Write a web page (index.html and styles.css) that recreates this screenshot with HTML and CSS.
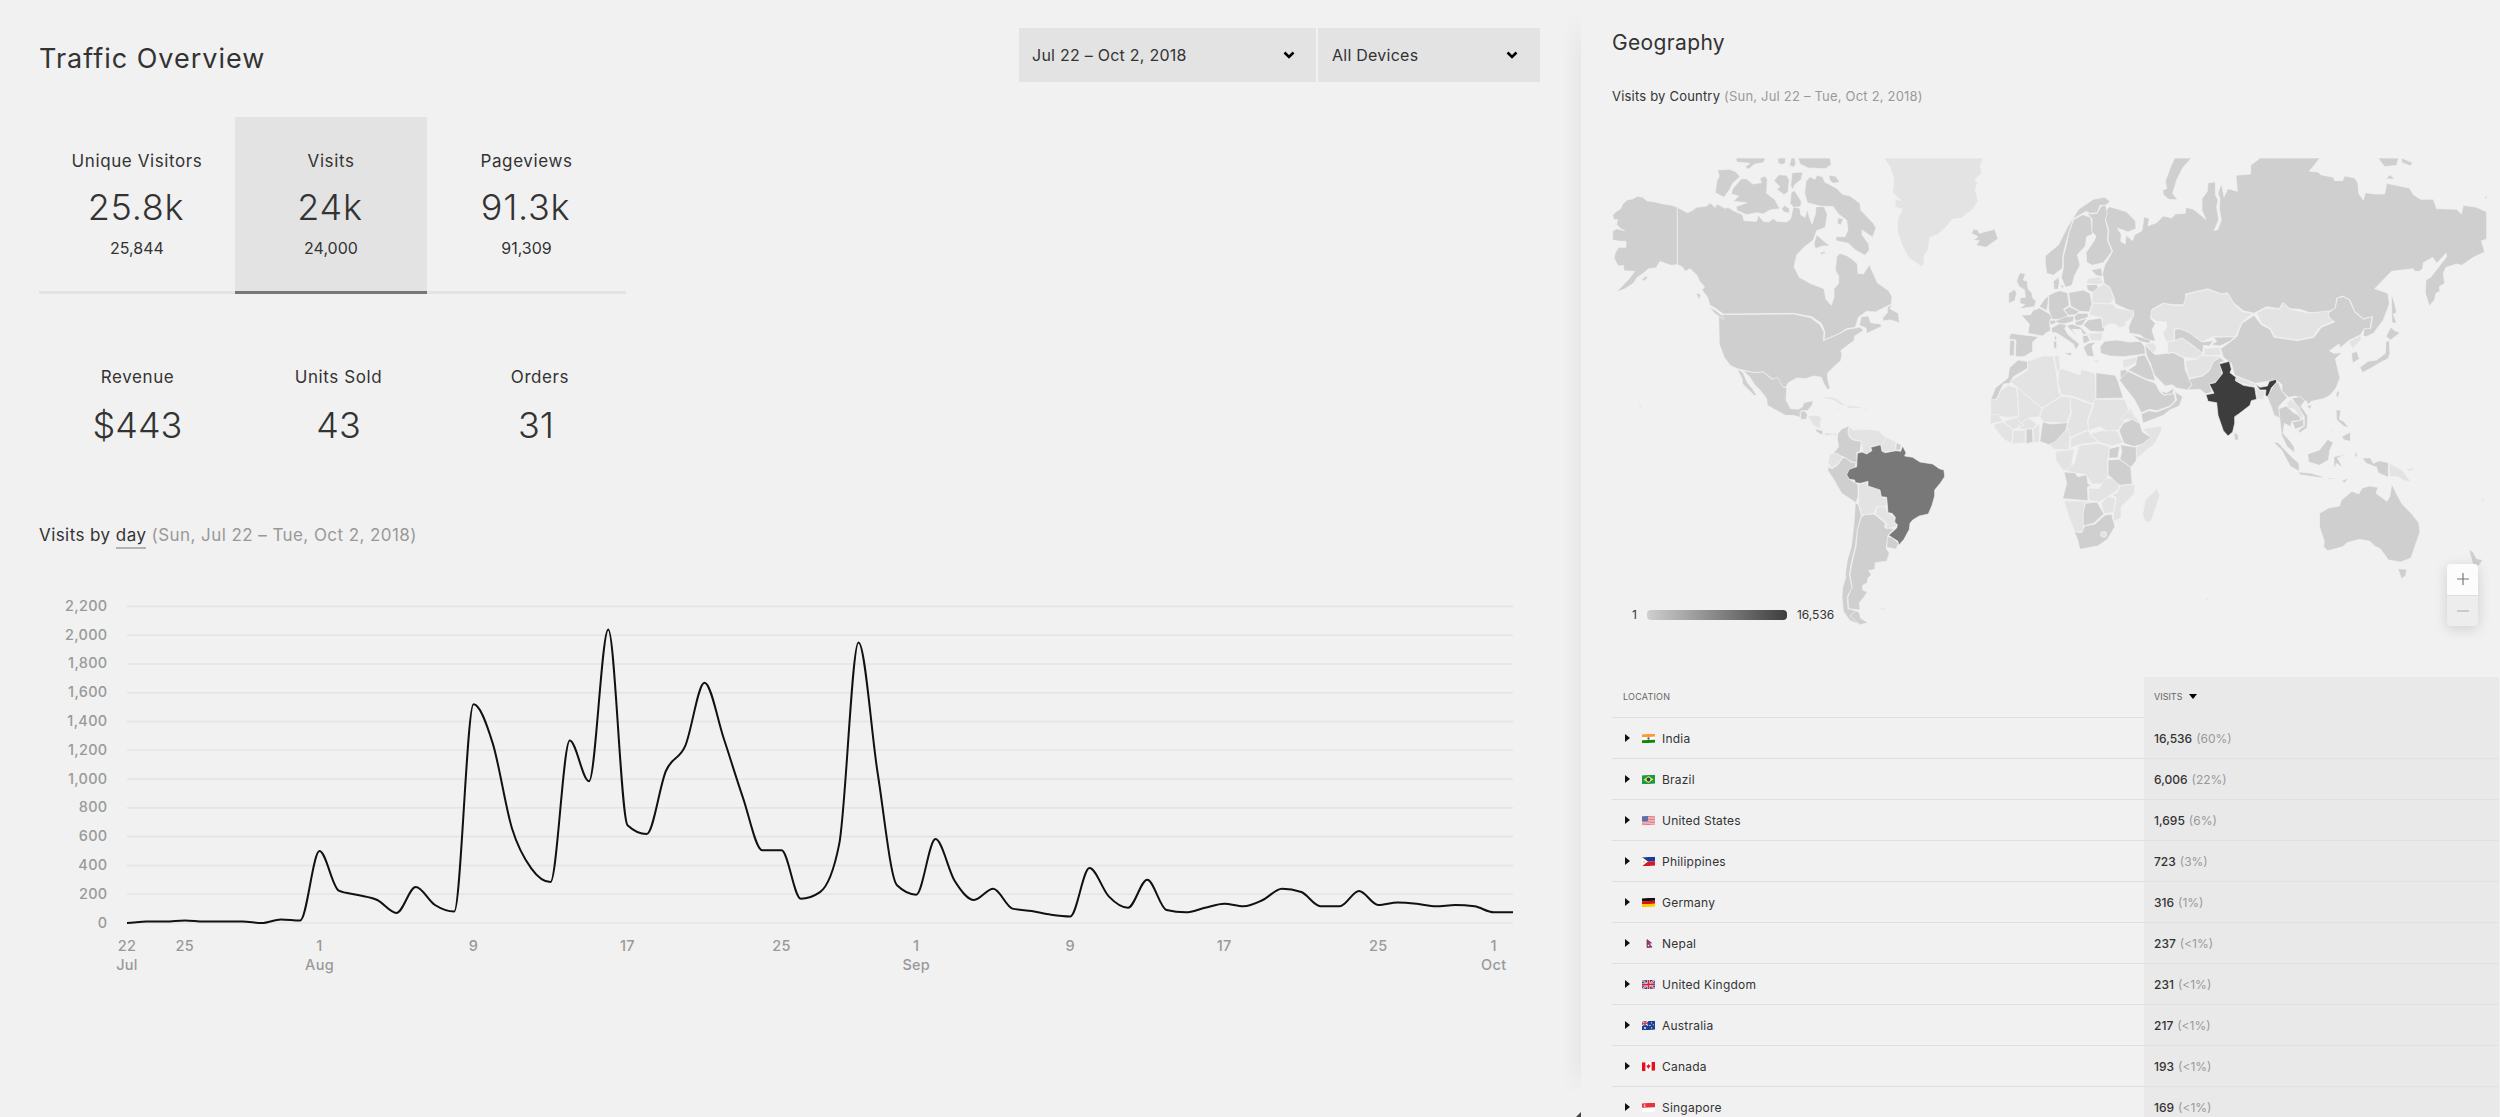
FILE: index.html
```html
<!DOCTYPE html>
<html lang="en">
<head>
    <meta charset="utf-8">
    <title>Traffic Overview</title>
    <link rel="stylesheet" href="styles.css">
</head>
<body>
    <main class="traffic">
        <header class="traffic-header">
            <h1>Traffic Overview</h1>
            <div class="filters">
                <button class="filter filter-date">
                    <span>Jul 22 – Oct 2, 2018</span>
                    <svg class="chevron" viewBox="0 0 12 8"><path d="M1.5 1.5 6 6 10.5 1.5"/></svg>
                </button>
                <button class="filter filter-device">
                    <span>All Devices</span>
                    <svg class="chevron" viewBox="0 0 12 8"><path d="M1.5 1.5 6 6 10.5 1.5"/></svg>
                </button>
            </div>
        </header>

        <div class="stats tabs">
            <div class="stat">
                <div class="label">Unique Visitors</div>
                <div class="value">25.8k</div>
                <div class="exact">25,844</div>
            </div>
            <div class="stat active">
                <div class="label">Visits</div>
                <div class="value">24k</div>
                <div class="exact">24,000</div>
            </div>
            <div class="stat">
                <div class="label">Pageviews</div>
                <div class="value">91.3k</div>
                <div class="exact">91,309</div>
            </div>
        </div>

        <div class="stats sales">
            <div class="stat">
                <div class="label">Revenue</div>
                <div class="value">$443</div>
            </div>
            <div class="stat">
                <div class="label">Units Sold</div>
                <div class="value">43</div>
            </div>
            <div class="stat orders">
                <div class="label">Orders</div>
                <div class="value">31</div>
            </div>
        </div>

        <h2 class="chart-title">Visits by <span class="interval">day</span> <span class="range">(Sun, Jul 22 – Tue, Oct 2, 2018)</span></h2>
        <svg id="chart" class="chart" viewBox="0 0 1500 400"></svg>
    </main>

    <aside class="geography">
        <h2>Geography</h2>
        <p class="map-title">Visits by Country <span class="range">(Sun, Jul 22 – Tue, Oct 2, 2018)</span></p>

        <div class="map">
            <svg class="world" viewBox="0 0 877 470">
                <!-- North America -->
                <g transform="translate(-12 -18) scale(.33333)">
                    <path d="M232 202 215 196 190 192 165 186 140 182 128 172 112 169 100 176 82 180 68 192 62 206 48 215 38 226 42 240 52 238 50 254 62 266 74 272 50 266 38 274 38 300 60 304 78 304 78 322 56 322 46 338 42 354 50 370 56 378 70 376 72 392 104 394 88 416 50 455 72 448 100 430 112 412 130 400 146 386 168 384 180 364 212 376 232 374Z"/>
                    <path d="M232 202 262 218 276 212 290 202 320 198 330 188 345 202 352 192 375 205 384 202 400 212 428 224 432 242 470 244 475 226 490 244 505 246 520 236 530 244 560 246 572 236 580 200 600 205 602 224 615 232 622 208 628 232 636 252 646 222 648 200 672 200 682 222 676 262 650 272 640 300 612 322 590 345 582 380 598 412 630 430 672 446 678 478 694 496 702 470 702 446 716 430 716 408 706 390 710 350 720 340 742 348 762 362 772 372 774 400 790 402 808 374 832 428 866 452 876 470 874 492 850 504 826 516 800 514 775 532 766 562 740 566 715 582 672 600 675 576 664 550 635 530 580 520 370 522 345 504 330 496 322 470 306 450 314 440 300 425 290 405 270 386 256 394 246 380 232 374Z"/>
                    <path d="M356 524 580 522 632 533 660 554 672 576 670 602 716 582 742 568 766 564 782 562 790 572 764 588 762 602 740 618 722 632 726 642 722 662 700 682 682 700 684 722 690 745 684 750 672 732 664 712 640 708 618 716 590 714 565 728 556 744 545 740 535 722 516 716 490 696 462 698 412 686 390 676 372 650 358 612Z"/>
                    <path d="M430 692 462 698 490 696 516 718 532 712 548 740 560 744 558 780 572 806 594 808 606 802 612 788 640 782 636 796 622 812 604 812 600 832 580 826 556 826 520 806 502 796 500 776 480 750 464 734 450 712Z M412 688 428 696 442 728 456 744 470 766 462 766 440 744 428 732 426 716Z M600 814 612 812 622 822 620 838 602 838Z M646 866 668 872 668 886 650 876Z"/>
                    <path d="M352 90 390 88 408 96 420 110 398 130 388 150 372 172 346 158 350 124 358 108Z M424 116 440 116 458 132 484 128 480 114 494 108 502 118 500 160 526 180 530 190 540 206 510 210 490 222 470 218 440 224 412 212 408 200 440 188 400 184 416 168 394 162 398 146Z M536 104 560 106 568 120 564 156 552 164 530 148 540 140 522 122Z M576 98 608 96 604 118 584 134 580 148 572 138Z M574 156 584 152 604 184 602 200 580 202 570 190Z M545 206 554 196 568 206 568 220 552 216Z"/>
                    <path d="M408 54H496L490 68 465 72 445 88 436 80 450 70 410 66Z M534 54H556V70L545 74 534 68Z M574 54H584L588 72 580 82 568 76Z M594 54H690L694 74 676 86 625 84 600 72Z M618 124 630 110 645 118 650 106 668 110 674 126 690 134 712 146 726 162 750 168 780 190 782 210 790 218 820 250 828 264 818 292 786 270 786 284 806 312 808 330 795 346 766 330 745 310 708 302 708 290 735 290 744 270 740 240 715 222 700 200 660 198 622 188 614 160Z M686 106 706 108 720 126 700 130 690 122Z M650 284 668 300 690 318 668 318 646 326 642 310Z M714 234 730 236 722 256 712 250Z"/>
                    <path d="M876 492 870 506 895 520 898 548 872 540 850 542 848 534 862 518 862 502Z M784 530 805 528 812 548 842 552 844 560 800 580 798 564 778 556Z M126 418 140 406 142 416 128 424Z M326 500 348 512 370 530 370 538 346 522Z M288 460 302 462 298 480Z M660 340 672 334 678 338 664 344Z M116 792 124 798 120 802Z M1114 280 1120 268 1134 270 1138 280 1160 274 1184 268 1194 296 1158 322 1128 316 1138 302 1120 300 1134 290Z"/>
                    <g class="no-data">
                        <path d="M852 54H1150L1140 80 1146 100 1124 118 1132 128 1126 150 1134 182 1120 206 1085 234 1056 238 1040 260 1012 284 990 292 984 330 972 346 972 374 962 378 925 352 905 312 892 272 894 236 908 208 886 202 885 178 904 182 878 158 882 120 870 80Z"/>
                        <path d="M662 772 680 770 706 774 738 796 725 796 700 780Z M740 796 780 800 786 806 742 804Z M622 828 652 826 664 832 660 866 640 856Z M672 878 708 880 710 892 700 884 676 888Z M792 805H804V809H792Z M708 804 722 808 712 810Z M88 776 96 778 92 781Z"/>
                    </g>
                </g>

                <!-- South America -->
                <g transform="translate(-12 222) scale(.33333)">
                    <path d="M712 176 714 160 726 146 748 138 744 152 748 172 760 180 784 184 780 214 770 218 772 248 756 246 734 232 700 220 716 200Z"/>
                    <path d="M684 260 696 266 712 256 730 232 738 234 752 246 768 248 765 262 742 280 748 298 766 308 774 314 774 350 768 368 725 340 702 300 684 272Z"/>
                    <path d="M888 188 904 194 900 210 888 210Z M862 470 876 472 896 490 888 508 860 502Z"/>
                    <path d="M784 410 794 404 822 402 856 430 854 442 880 446 886 442 864 466 858 504 868 520 860 544 826 548 824 568 806 572 814 584 804 594 802 608 788 616 788 630 802 636 790 654 778 668 780 690 745 686 744 650 756 620 750 584 756 548 768 500 772 450Z"/>
                    <path d="M766 368 776 374 784 406 772 450 766 500 754 548 748 584 756 624 742 650 744 686 772 694 784 735 750 722 730 694 726 650 728 622 738 590 736 584 742 540 754 500 762 430Z"/>
                    <path d="M768 692 778 698 782 715 804 728 780 734 750 708Z"/>
                    <g class="no-data">
                        <path d="M748 140 760 150 800 148 835 152 858 172 848 194 812 200 814 218 790 222 784 184 756 178 744 160Z"/>
                        <path d="M860 172 888 186 886 212 848 216 842 196Z M690 222 712 220 728 232 712 254 694 264 684 246Z"/>
                        <path d="M776 314 800 304 806 318 840 330 844 352 860 354 860 378 830 380 822 400 786 406 776 372Z"/>
                        <path d="M832 380 854 378 864 398 886 414 890 440 858 446 860 430 826 402Z M830 686 858 682 850 690Z"/>
                    </g>
                    <path class="brazil" d="M772 220 786 216 800 222 816 212 812 202 842 194 846 214 856 218 888 212 902 214 908 198 918 218 914 228 938 232 960 246 998 252 1018 266 1032 270 1034 290 1022 308 1004 330 1004 348 996 376 985 402 958 408 938 420 930 430 928 448 912 478 896 496 894 484 866 466 890 444 892 434 884 426 886 412 876 400 864 398 860 352 844 350 840 330 804 318 804 304 782 310 766 308 764 300 748 298 740 284 748 268 770 260Z"/>
                </g>

                <!-- Europe and Asia -->
                <g transform="translate(388 -18) scale(.33333)">
                    <path d="M328 200 350 206 380 216 406 242 408 266 384 276 352 264 364 284 362 304 376 312 378 286 398 302 404 284 426 272 428 258 432 230 448 236 444 258 470 248 490 228 515 234 526 222 556 220 558 202 580 208 618 238 606 212 606 176 622 154 624 128 646 126 646 164 654 180 650 200 656 240 642 272 654 268 664 240 658 206 660 176 654 160 664 130 672 170 684 146 712 154 708 106 752 102 752 76 778 56V54H960L928 94 955 96 962 104 1000 112 1004 122 1028 122 1034 108 1064 114 1074 130 1076 160 1090 180 1096 158 1124 162 1154 162 1160 130 1228 144 1240 164 1262 178 1300 178 1310 206 1370 208 1384 222 1390 196 1430 202 1460 216V298L1444 302 1454 336 1420 352 1385 376 1370 372 1338 382 1330 400 1334 430 1318 440 1320 454 1308 460 1303 480 1288 498 1276 460 1278 420 1292 412 1340 350 1338 340 1310 370 1298 352 1270 368 1268 386 1258 394 1244 394 1240 386 1175 394 1124 446 1164 460 1168 492 1150 540 1120 580 1098 590 1090 588 1092 564 1112 566 1118 530 1090 536 1064 514 1050 480 1028 468 1010 474 1006 504 984 516 930 518 900 508 870 506 848 488 838 506 800 500 762 520 730 512 700 488 682 458 664 462 624 446 556 462 560 480 552 494 520 494 488 490 456 508 452 536 466 550 456 570 466 604 440 600 420 584 388 580 386 562 402 520 382 508 346 492 342 472 328 440 312 430 308 400 314 376 338 334 324 300 326 270 316 236 318 212Z"/>
                    <path d="M524 54H574L548 84 530 120 518 160 532 180 506 178 490 164 488 150 500 146 496 124 512 80Z M1134 54H1196L1190 76 1154 80Z M1204 54 1238 68 1232 78 1206 68Z M1158 116 1170 104 1184 118Z M1452 176 1460 164V176Z M1174 462 1184 490 1190 518 1180 522 1190 550 1176 548Z"/>
                    <path d="M136 348 176 314 202 262 236 208 280 178 314 172 330 184 318 196 300 196 292 218 270 220 258 214 220 236 206 280 196 316 188 350 188 384 160 406 140 400 136 370Z"/>
                    <path d="M248 224 272 232 278 282 260 290 256 318 232 344 240 376 224 406 216 436 196 442 184 412 190 384 190 350 198 320 208 274 222 238Z"/>
                    <path d="M260 218 274 222 292 220 302 200 316 194 322 220 316 240 324 270 322 300 336 334 310 368 276 376 260 366 258 338 284 300 288 288 276 276 276 236Z"/>
                    <path d="M160 424 176 412 178 428 174 448 162 448Z M180 436H192L188 446Z M274 390 304 384 308 410 288 406Z M260 434 290 434 296 444 282 458 262 450Z"/>
                    <path d="M206 458 250 450 270 460 276 492 268 516 240 514 212 498Z"/>
                    <path d="M146 466 166 456 180 452 202 458 208 496 190 508 204 526 198 538 156 538 146 510Z"/>
                    <path d="M192 510 208 500 238 514 226 524 206 526Z M160 546 196 530 222 528 220 544 190 552Z M222 532 232 520 264 520 264 532 228 544Z M224 546 262 534 246 556 230 556Z M264 540 304 534 314 568 308 576 272 574 250 556Z"/>
                    <path d="M200 558 216 552 240 560 262 582 248 582 242 568 216 568 228 584 236 594Z M248 586 262 586 270 602 250 612Z M250 622 264 610 288 606 276 618 282 650 262 648Z M278 660 298 662 290 666Z"/>
                    <path d="M154 564 180 550 200 556 194 566 206 586 238 612 228 630 220 612 184 588 168 578 156 578Z M192 638 216 638 212 648Z M160 604H170V626H162Z M164 588H170V600H164Z M148 542 166 540 168 550 150 554Z"/>
                    <path d="M64 526 92 524 98 512 118 504 146 520 156 530 148 546 152 572 136 580 128 588 84 580 88 552Z M118 500 134 476 146 468 144 492 140 512Z"/>
                    <path d="M28 590 34 580 64 584 116 590 98 606 98 634 72 650 52 650 46 646 48 600 28 598Z M30 602 44 600 42 648 28 646Z"/>
                    <path d="M56 406 62 398 76 402 70 420 82 424 84 446 96 460 98 474 108 484 104 500 58 506 74 494 60 490 60 474 76 472 74 450 58 440 50 424Z M26 460 44 448 50 460 44 482 26 490Z"/>
                    <path d="M300 620 314 604 350 600 388 606 422 604 434 620 436 642 372 650 330 648 302 640Z M396 584 430 594 454 602 446 610 420 604Z"/>
                    <path d="M524 568 540 566 568 578 606 606 640 602 628 618 610 616 608 640 576 614 546 594 524 602Z M640 592 704 590 690 604 660 618 632 614 650 604Z"/>
                    <path d="M434 614 466 644 500 640 520 638 552 654 556 690 566 712 576 734 562 750 530 744 516 734 496 738 464 706 452 672 440 648Z"/>
                    <path d="M408 650 434 644 446 666 458 694 466 722 440 718 384 690 408 674Z M360 692 378 688 384 700 370 716 362 714Z"/>
                    <path d="M358 720 384 694 440 720 466 730 480 756 492 766 522 760 526 780 510 798 470 812 448 808 424 818 404 780 384 754Z"/>
                    <path d="M424 822 446 812 470 816 510 800 530 780 524 754 548 770 538 798 510 810 490 826 428 850Z M482 752 500 758 522 744 518 762 492 764Z"/>
                    <path d="M566 718 608 708 628 692 640 664 660 652 674 664 660 668 664 684 666 702 646 728 630 732 636 756 618 762 600 748 564 750 576 734Z"/>
                    <path d="M662 626 690 606 710 590 726 550 762 526 784 554 810 568 822 592 892 602 942 592 964 562 1004 546 988 534 984 520 1006 504 1012 474 1030 470 1048 480 1064 516 1090 538 1116 530 1110 566 1092 566 1082 584 1046 602 1020 624 1018 612 988 632 1002 640 1026 638 1006 656 1014 690 1020 714 1008 744 990 766 970 776 934 784 924 794 920 784 900 778 888 768 866 772 846 754 846 734 826 718 804 724 766 730 704 706 694 670 670 652Z M920 798 936 794 930 808Z M1008 762 1016 750 1018 760 1012 776Z"/>
                    <path d="M1054 640 1070 634 1078 656 1058 670Z M1080 682 1104 664 1130 660 1156 640 1158 604 1168 602 1170 640 1164 656 1140 668 1120 680 1088 698Z M1158 590 1172 562 1184 572 1200 578 1172 600Z"/>
                    <path d="M802 770 816 744 826 728 836 728 846 754 862 772 836 800 842 836 822 826 816 806Z M702 876 714 884 716 900 704 900Z"/>
                    <g class="no-data">
                        <path d="M262 416 300 410 310 430 290 434 260 430Z M276 458 298 440 312 432 330 442 342 476 330 492 276 488Z"/>
                        <path d="M268 524 278 490 338 492 348 504 400 512 400 532 374 548 382 556 358 564 346 552 328 552 308 564 306 534Z M266 580 308 578 304 602 272 602Z"/>
                        <path d="M454 512 490 490 520 496 550 496 560 462 624 448 664 462 684 460 702 492 728 516 758 520 726 546 706 590 640 590 606 606 568 578 540 566 522 566V600L500 606 488 580 500 562 498 546 470 544 452 532Z"/>
                        <path d="M502 606 524 602 546 594 576 616 610 642 588 656 552 652 520 636 504 640Z M612 626 658 622 664 646 612 646Z M556 662 588 658 606 646 666 650 640 664 628 690 606 708 566 714Z"/>
                        <path d="M770 518 800 504 838 508 850 488 870 508 930 520 988 512 984 532 1002 544 960 560 940 590 892 600 824 590 812 566 784 550Z"/>
                        <path d="M1046 606 1082 586 1084 598 1058 626Z M704 706 764 730 764 740 704 724Z M766 744 796 754 790 778 772 778Z M368 660 412 650 406 670 370 686Z M436 612 462 608 470 624 460 640Z"/>
                    </g>
                    <path class="india" d="M658 672 688 664 694 688 690 698 708 712 706 722 730 736 764 742 766 754 770 778 754 782 750 796 716 822 704 830V850L698 876 684 888 670 872 654 826 650 788 624 784 618 764 642 760 628 732 646 728 668 700 664 688Z M766 732 780 742 802 738 808 724 828 718 830 726 814 744 808 760 802 770 796 766 798 750 780 750Z"/>
                </g>

                <!-- North Africa -->
                <g transform="translate(388 -18) scale(.33333)" class="no-data">
                    <path class="has-data" d="M54 660 82 664 84 684 40 710 30 730 10 732-12 780-28 780-14 744 24 714 28 684Z"/>
                    <path d="M30 724 84 690 82 664 130 648 160 648 168 690 176 756 184 768 126 804Z M162 648 176 646 182 684 172 700Z"/>
                    <path d="M176 694 186 686 240 704 244 688 286 700 288 776 280 792 216 768 184 764 174 730Z"/>
                    <path class="has-data" d="M288 698 346 706 354 724 370 774 288 776Z"/>
                    <path d="M284 778 374 778 386 810 370 850 356 868 330 880 300 860 266 872 264 842 280 800Z M210 770 278 794 262 842 266 868 212 892 200 860 214 820Z"/>
                    <path d="M126 806 184 770 210 770 212 816 200 850 130 846 118 828Z M52 742 126 806 120 830 86 834 62 862 30 856 28 836 56 830Z M-28 780-10 778 4 750 26 736 50 744 56 830 20 832-28 824Z"/>
                    <path d="M382 816 392 804 418 850 404 846Z"/>
                </g>

                <!-- Africa, Southeast Asia and Oceania -->
                <g transform="translate(348 222) scale(.34435 .33333)">
                    <g class="no-data">
                        <path d="M88 106 112 102 124 124 88 132Z M96 134 124 126 154 146 150 190 130 180 108 154Z M154 152 190 150 190 188 152 192Z M126 124 164 114 184 136 154 150Z M170 134 200 114 224 132 212 146 174 148Z M212 146 232 132 230 188 214 188Z"/>
                        <path d="M312 146 320 160 316 210 274 208 260 196 282 172Z M322 174 370 152 404 186 346 194 320 204Z M374 162 412 152 456 152 474 188 440 198 404 186Z M464 120 490 90 524 126 486 118Z M278 214 332 208 322 266 300 272 278 240Z"/>
                        <path d="M346 196 402 190 436 200 428 244 430 290 418 312 384 312 366 284 338 280 306 272 332 250Z M530 146 584 138 586 150 566 190 512 236V202L554 172Z"/>
                        <path d="M302 362 390 364 362 370 358 454 334 458 316 410Z M374 324 404 326 424 294 460 296 462 326 430 350 404 366 374 360Z M410 370 430 348 452 356 446 398 418 400Z M464 316 508 314 506 342 468 380 468 414 446 424 446 398 454 352 440 344 456 338Z"/>
                        <path d="M572 326 580 346 556 422 540 428 530 404 538 360Z M714 654H726L718 662Z"/>
                    </g>
                    <path d="M192 148 210 146 212 186 192 192Z M240 126 262 132 312 128 308 150 290 170 276 186 258 194 232 184 236 152Z M462 152 474 130 500 118 522 130 530 156 554 172 530 192 506 200 476 190Z M466 194 512 202V242L496 262 464 238 470 216Z M434 206 464 198 458 234 432 234Z M430 240 464 238 496 262 500 312 464 316 430 284Z"/>
                    <path d="M302 276 334 278 342 290 368 284 372 312 382 314 370 322 372 362 298 356 310 310Z M364 370 398 366 418 402 388 430 358 438 358 398Z M332 456 354 458 362 438 392 432 420 406 440 402 450 440 428 478 400 498 348 508 342 480Z"/>
                    <circle class="no-data" cx="417" cy="463" r="9"/>
                    <path d="M926 86 948 78 966 96 990 110 988 122 964 124 960 140 942 130 938 160 956 180 970 200 972 218 950 200 934 166 930 130Z M964 126 998 118 998 138 974 148Z M964 54 988 50 1002 62 990 78 1010 108 1008 144 984 160 984 150 1000 138 1000 110 984 88Z"/>
                    <path class="no-data" d="M948 68 962 58 984 80 998 114 988 114 972 88 954 84Z"/>
                    <path d="M910 186 924 188 958 226 984 250 986 274 960 260 934 210Z M984 276 1020 280 1054 290 1052 294 986 284Z M1010 222 1044 210 1068 178 1084 188 1074 210 1070 240 1044 256 1012 246Z M1086 230 1122 222 1096 234 1112 264 1094 250 1086 266Z M1146 214 1154 224 1148 236Z M1070 294H1096L1072 298Z M1108 302 1130 294 1116 308Z"/>
                    <path d="M1168 234 1192 234 1200 250 1218 242 1244 248V292L1214 278 1210 262 1180 250Z M1092 90 1106 90 1102 118 1114 124 1128 142 1116 140 1094 120Z M1108 170 1134 156 1134 184 1116 180Z M1068 166 1086 146 1084 152Z"/>
                    <path class="no-data" d="M1246 250 1284 270 1310 306 1290 302 1270 290 1248 290Z M1290 270 1324 262 1308 274Z M1412 384 1432 402 1422 396Z M1512 362 1526 354 1520 366Z"/>
                    <path d="M1044 400 1070 384 1102 378 1108 360 1138 334 1158 342 1168 324 1190 318 1214 322 1208 340 1240 364 1248 350 1254 312 1266 338 1284 372 1314 404 1332 428 1336 456 1324 490 1310 534 1280 546 1244 540 1226 514 1220 506 1204 498 1190 484 1160 478 1124 488 1112 500 1068 512 1056 500 1058 484 1044 440Z M1272 566 1298 568 1294 588 1282 596Z M1478 508 1490 516 1500 536 1518 540 1500 566 1488 548Z"/>
                </g>
            </svg>

            <div class="legend">
                <span>1</span>
                <div class="scale"></div>
                <span>16,536</span>
            </div>
            <div class="zoom">
                <button class="zoom-in"><svg viewBox="0 0 12 12"><path d="M0 6H12M6 0V12"/></svg></button>
                <button class="zoom-out"><svg viewBox="0 0 12 12"><path d="M0 6H12"/></svg></button>
            </div>
        </div>

        <div class="table">
            <div class="row head">
                <div class="location">LOCATION</div>
                <div class="visits">VISITS <i class="sort"></i></div>
            </div>
            <div class="row">
                <div class="location"><i class="arrow"></i>
                    <svg class="flag" viewBox="0 0 13 9"><path fill="#f93" d="M0 0H13V3H0Z"/><path fill="#fff" d="M0 3H13V6H0Z"/><path fill="#138808" d="M0 6H13V9H0Z"/><circle cx="6.5" cy="4.5" r="1.2" fill="#557"/></svg>
                    India</div>
                <div class="visits"><b>16,536</b> (60%)</div>
            </div>
            <div class="row">
                <div class="location"><i class="arrow"></i>
                    <svg class="flag" viewBox="0 0 13 9"><path fill="#159a47" d="M0 0H13V9H0Z"/><path fill="#f3e03b" d="M6.5 1 11.5 4.5 6.5 8 1.5 4.5Z"/><circle cx="6.5" cy="4.5" r="1.9" fill="#1b3f84"/></svg>
                    Brazil</div>
                <div class="visits"><b>6,006</b> (22%)</div>
            </div>
            <div class="row">
                <div class="location"><i class="arrow"></i>
                    <svg class="flag" viewBox="0 0 13 9"><path fill="#f3dfe1" d="M0 0H13V9H0Z"/><path stroke="#d9606c" stroke-width=".8" d="M0 .5H13M0 2.1H13M0 3.7H13M0 5.3H13M0 6.9H13M0 8.5H13"/><path fill="#5672a8" d="M0 0H6V5H0Z"/></svg>
                    United States</div>
                <div class="visits"><b>1,695</b> (6%)</div>
            </div>
            <div class="row">
                <div class="location"><i class="arrow"></i>
                    <svg class="flag" viewBox="0 0 13 9"><path fill="#1c3c9c" d="M0 0H13V4.5H0Z"/><path fill="#d01b2c" d="M0 4.5H13V9H0Z"/><path fill="#fff" d="M0 0 6 4.5 0 9Z"/><circle cx="2" cy="4.5" r="1" fill="#f5c82e"/></svg>
                    Philippines</div>
                <div class="visits"><b>723</b> (3%)</div>
            </div>
            <div class="row">
                <div class="location"><i class="arrow"></i>
                    <svg class="flag" viewBox="0 0 13 9"><path fill="#111" d="M0 0H13V3H0Z"/><path fill="#d8110c" d="M0 3H13V6H0Z"/><path fill="#fc0" d="M0 6H13V9H0Z"/></svg>
                    Germany</div>
                <div class="visits"><b>316</b> (1%)</div>
            </div>
            <div class="row">
                <div class="location"><i class="arrow"></i>
                    <svg class="flag" viewBox="0 0 13 9"><path fill="#d32a4b" stroke="#38407f" stroke-width=".7" d="M5 .5 9.5 4.2H7L10 8.4H5Z"/><circle cx="6.5" cy="6.5" r=".8" fill="#fff"/></svg>
                    Nepal</div>
                <div class="visits"><b>237</b> (&lt;1%)</div>
            </div>
            <div class="row">
                <div class="location"><i class="arrow"></i>
                    <svg class="flag" viewBox="0 0 13 9"><path fill="#27408b" d="M0 0H13V9H0Z"/><path stroke="#fff" stroke-width="1.6" d="M0 0 13 9M13 0 0 9"/><path stroke="#d0203a" stroke-width=".7" d="M0 0 13 9M13 0 0 9"/><path stroke="#fff" stroke-width="2.6" d="M6.5 0V9M0 4.5H13"/><path stroke="#d0203a" stroke-width="1.6" d="M6.5 0V9M0 4.5H13"/></svg>
                    United Kingdom</div>
                <div class="visits"><b>231</b> (&lt;1%)</div>
            </div>
            <div class="row">
                <div class="location"><i class="arrow"></i>
                    <svg class="flag" viewBox="0 0 13 9"><path fill="#1d3f92" d="M0 0H13V9H0Z"/><path stroke="#e9dfe6" stroke-width="1.2" d="M0 0 6 4.5M6 0 0 4.5"/><path stroke="#d4425a" stroke-width="1.2" d="M3 0V4.5M0 2.2H6"/><g fill="#fff"><circle cx="3" cy="6.8" r=".9"/><circle cx="9.5" cy="2" r=".6"/><circle cx="11.3" cy="4" r=".6"/><circle cx="8" cy="4.5" r=".6"/><circle cx="9.6" cy="7" r=".7"/></g></svg>
                    Australia</div>
                <div class="visits"><b>217</b> (&lt;1%)</div>
            </div>
            <div class="row">
                <div class="location"><i class="arrow"></i>
                    <svg class="flag" viewBox="0 0 13 9"><path fill="#fff" d="M0 0H13V9H0Z"/><path fill="#e5121b" d="M0 0H3.4V9H0Z M9.6 0H13V9H9.6Z M6.5 1.8 7.2 3.2 8.8 3.6 7.6 5.6 6.8 5.7V7H6.2V5.7L5.4 5.6 4.2 3.6 5.8 3.2Z"/></svg>
                    Canada</div>
                <div class="visits"><b>193</b> (&lt;1%)</div>
            </div>
            <div class="row">
                <div class="location"><i class="arrow"></i>
                    <svg class="flag" viewBox="0 0 13 9"><path fill="#fff" d="M0 0H13V9H0Z"/><path fill="#e5343f" d="M0 0H13V4.5H0Z"/><circle cx="3" cy="2.3" r="1.3" fill="#fff"/><circle cx="3.7" cy="2.3" r="1.1" fill="#e5343f"/></svg>
                    Singapore</div>
                <div class="visits"><b>169</b> (&lt;1%)</div>
            </div>
        </div>
    </aside>

    <script>
        const visits = [
            0, 10, 10, 18, 10, 10, 10, 0, 25, 18,
            500, 225, 195, 160, 70, 250, 125, 80, 1520, 1248, 657, 380, 285, 1268, 985,
            2040, 680, 618, 1058, 1231, 1670, 1282, 870, 505, 505, 169, 215, 550, 1950, 1037, 262,
            197, 583, 292, 160, 238, 100, 83, 58, 46, 382, 185, 106, 301, 90, 74, 106, 134, 116, 160,
            238, 215, 116, 116, 222, 125, 143, 134, 116, 125, 116,
            74, 74
        ];
        const ticks = [
            [0, '22', 'Jul'], [3, '25'], [10, '1', 'Aug'], [18, '9'], [26, '17'], [34, '25'],
            [41, '1', 'Sep'], [49, '9'], [57, '17'], [65, '25'], [71, '1', 'Oct']
        ];

        const left = 88, step = 19.25, bottom = 333, unit = 28.78 / 200;
        const x = day => left + day * step;
        const y = value => bottom - value * unit;

        // slope at each day, limited so the curve never overshoots the data
        function slope(i) {
            if (i === 0 || i === visits.length - 1) return 0;
            const a = (y(visits[i]) - y(visits[i - 1])) / step;
            const b = (y(visits[i + 1]) - y(visits[i])) / step;
            if (a * b <= 0) return 0;
            return Math.sign(a) * 2 * Math.min(Math.abs(a), Math.abs(b), Math.abs(a + b) / 4);
        }

        let html = '';
        for (let v = 0; v <= 2200; v += 200) {
            html += `<line class="grid" x1="${left}" x2="${x(72)}" y1="${y(v)}" y2="${y(v)}"/>`;
            html += `<text class="axis axis-y" x="68.5" y="${y(v) + 4.5}">${v.toLocaleString('en-US')}</text>`;
        }
        ticks.forEach(([day, num, month]) => {
            html += `<text class="axis" x="${x(day)}" y="361">${num}</text>`;
            if (month) html += `<text class="axis" x="${x(day)}" y="380">${month}</text>`;
        });

        let d = `M${x(0)} ${y(visits[0])}`;
        for (let i = 1; i < visits.length; i++) {
            const t = step / 3;
            d += `C${x(i - 1) + t} ${y(visits[i - 1]) + slope(i - 1) * t} ${x(i) - t} ${y(visits[i]) - slope(i) * t} ${x(i)} ${y(visits[i])}`;
        }
        html += `<path class="line" d="${d}"/>`;
        document.getElementById('chart').innerHTML = html;
    </script>
</body>
</html>
```
FILE: styles.css
```css
* {
    box-sizing: border-box;
}

body {
    margin: 0;
    height: 1117px;
    display: grid;
    grid-template-columns: 1581px 1fr;
    grid-template-rows: 1117px;
    overflow: hidden;
    background: #f1f1f1;
    color: #333;
    font-family: Inter, "Liberation Sans", sans-serif;
}

h1, h2, p {
    margin: 0;
    font-weight: 400;
}

button {
    margin: 0;
    padding: 0;
    border: none;
    font: inherit;
    color: inherit;
    letter-spacing: inherit;
}

.range {
    color: #999;
}

/* traffic */

.traffic {
    padding-left: 39px;
}

.traffic-header {
    display: flex;
    justify-content: space-between;
    height: 117px;
}

h1 {
    margin-top: 43px;
    font-size: 27px;
    line-height: 32px;
    letter-spacing: 1px;
}

.filters {
    display: flex;
    gap: 2px;
    margin: 28px 41px 0 0;
    height: 54px;
    font-size: 16px;
    letter-spacing: 0.25px;
}

.filter {
    display: flex;
    align-items: center;
    justify-content: space-between;
    background: #e3e3e3;
}

.filter-date {
    width: 297px;
    padding: 0 21px 0 13px;
}

.filter-device {
    width: 222px;
    padding: 0 22px 0 14px;
}

.chevron {
    width: 12px;
    height: 8px;
    fill: none;
    stroke: #000;
    stroke-width: 2.6;
}

.stats {
    display: grid;
    text-align: center;
}

.tabs {
    grid-template-columns: 196px 192px 199px;
    width: 587px;
    height: 177px;
}

.tabs .stat {
    padding-top: 33px;
    border-bottom: 3px solid #e3e3e3;
}

.tabs .active {
    background: #e3e3e3;
    border-bottom-color: #777;
}

.label {
    font-size: 17px;
    line-height: 22px;
    letter-spacing: 0.6px;
}

.value {
    margin-top: 13px;
    font-size: 36px;
    font-weight: 300;
    line-height: 44px;
    letter-spacing: 0.7px;
}

.tabs .value {
    margin-left: -2px;
}

.exact {
    margin-top: 9px;
    font-size: 16px;
    line-height: 20px;
}

.sales {
    grid-template-columns: 197px 205px 198px;
    width: 600px;
    margin-top: 72px;
}

.sales .value {
    margin-top: 15px;
    letter-spacing: 0;
}

.orders .value {
    margin-left: -8px;
}

.chart-title {
    height: 24px;
    margin-top: 76px;
    font-size: 17px;
    line-height: 24px;
    letter-spacing: 0.43px;
}

.interval {
    display: inline-block;
    border-bottom: 2px solid #b3b3b3;
}

.chart {
    display: block;
    width: 1500px;
    height: 400px;
    margin-top: 43px;
}

.grid {
    stroke: #e4e4e4;
    stroke-width: 1.6;
}

.axis {
    fill: #999;
    font-size: 14.5px;
    font-weight: 500;
    letter-spacing: 0.3px;
    text-anchor: middle;
}

.axis-y {
    text-anchor: end;
}

.line {
    fill: none;
    stroke: #111;
    stroke-width: 2;
}

/* geography */

.geography {
    position: relative;
    padding: 29px 0 0 31px;
    background: #f1f1f1;
}

.geography::before {
    content: "";
    position: absolute;
    left: -20px;
    top: 0;
    width: 20px;
    height: 1117px;
    background: linear-gradient(to bottom, #f1f1f1 15px, transparent 60px, transparent 1060px, #f1f1f1 1095px),
        linear-gradient(to right, #f1f1f1, #e7e7e7);
}

.geography::after {
    content: "";
    position: absolute;
    left: -5px;
    bottom: 0;
    border-left: 5px solid transparent;
    border-bottom: 5px solid #444;
}

.geography h2 {
    font-size: 21px;
    line-height: 28px;
    letter-spacing: 0.35px;
}

.map-title {
    margin-top: 29px;
    font-size: 13px;
    line-height: 20px;
    letter-spacing: 0.2px;
}

.map {
    position: relative;
    margin-top: 52px;
    height: 519px;
}

.world {
    display: block;
    width: 877px;
    height: 470px;
    fill: #cfcfcf;
    stroke: #f1f1f1;
    stroke-width: 2;
    stroke-linejoin: round;
}

.no-data {
    fill: #e3e3e3;
}

.has-data {
    fill: #cfcfcf;
}

.brazil {
    fill: #787878;
}

.india {
    fill: #3d3d3d;
}

.legend {
    position: absolute;
    left: 20px;
    top: 449px;
    display: flex;
    align-items: center;
    gap: 10px;
    font-size: 12px;
    line-height: 16px;
}

.scale {
    width: 140px;
    height: 10px;
    border-radius: 4px;
    background: linear-gradient(to right, #cfcfcf, #3d3d3d);
}

.zoom {
    position: absolute;
    left: 835px;
    top: 406px;
    width: 31px;
    height: 62px;
    display: grid;
    border-radius: 4px;
    overflow: hidden;
    background: #ededed;
    box-shadow: 0 3px 14px rgba(0, 0, 0, 0.14);
}

.zoom button {
    display: grid;
    place-items: center;
    background: none;
}

.zoom .zoom-in {
    background: #fcfcfc;
    border-bottom: 1px solid #ddd;
}

.zoom svg {
    width: 12px;
    height: 12px;
    stroke: #777;
    stroke-width: 1.2;
}

.zoom .zoom-out svg {
    stroke: #aaa;
}

.row {
    display: grid;
    grid-template-columns: 532px 355px;
    height: 41.05px;
    font-size: 12px;
}

.row > div {
    display: flex;
    align-items: center;
    border-bottom: 1px solid #dfdfdf;
}

.row .location {
    letter-spacing: 0.22px;
}

.row .visits {
    gap: 4px;
    padding-left: 10px;
    background: #e9e9e9;
    border-bottom-color: #e1e1e1;
    color: #999;
}

.row b {
    font-weight: 500;
    color: #333;
}

.head {
    font-size: 9px;
}

.head > div {
    padding: 0 0 2px 11px;
    color: #666;
}

.head .visits {
    gap: 7px;
    border-bottom-color: #e9e9e9;
    color: #666;
}

.arrow {
    width: 0;
    margin: 0 12px 0 13px;
    border: 4px solid transparent;
    border-left: 5px solid #111;
    border-right: none;
}

.sort {
    border: 4px solid transparent;
    border-top: 5px solid #000;
    border-bottom: none;
}

.flag {
    width: 13px;
    height: 9px;
    margin-right: 7px;
    transform: skewY(-3deg);
}
```
